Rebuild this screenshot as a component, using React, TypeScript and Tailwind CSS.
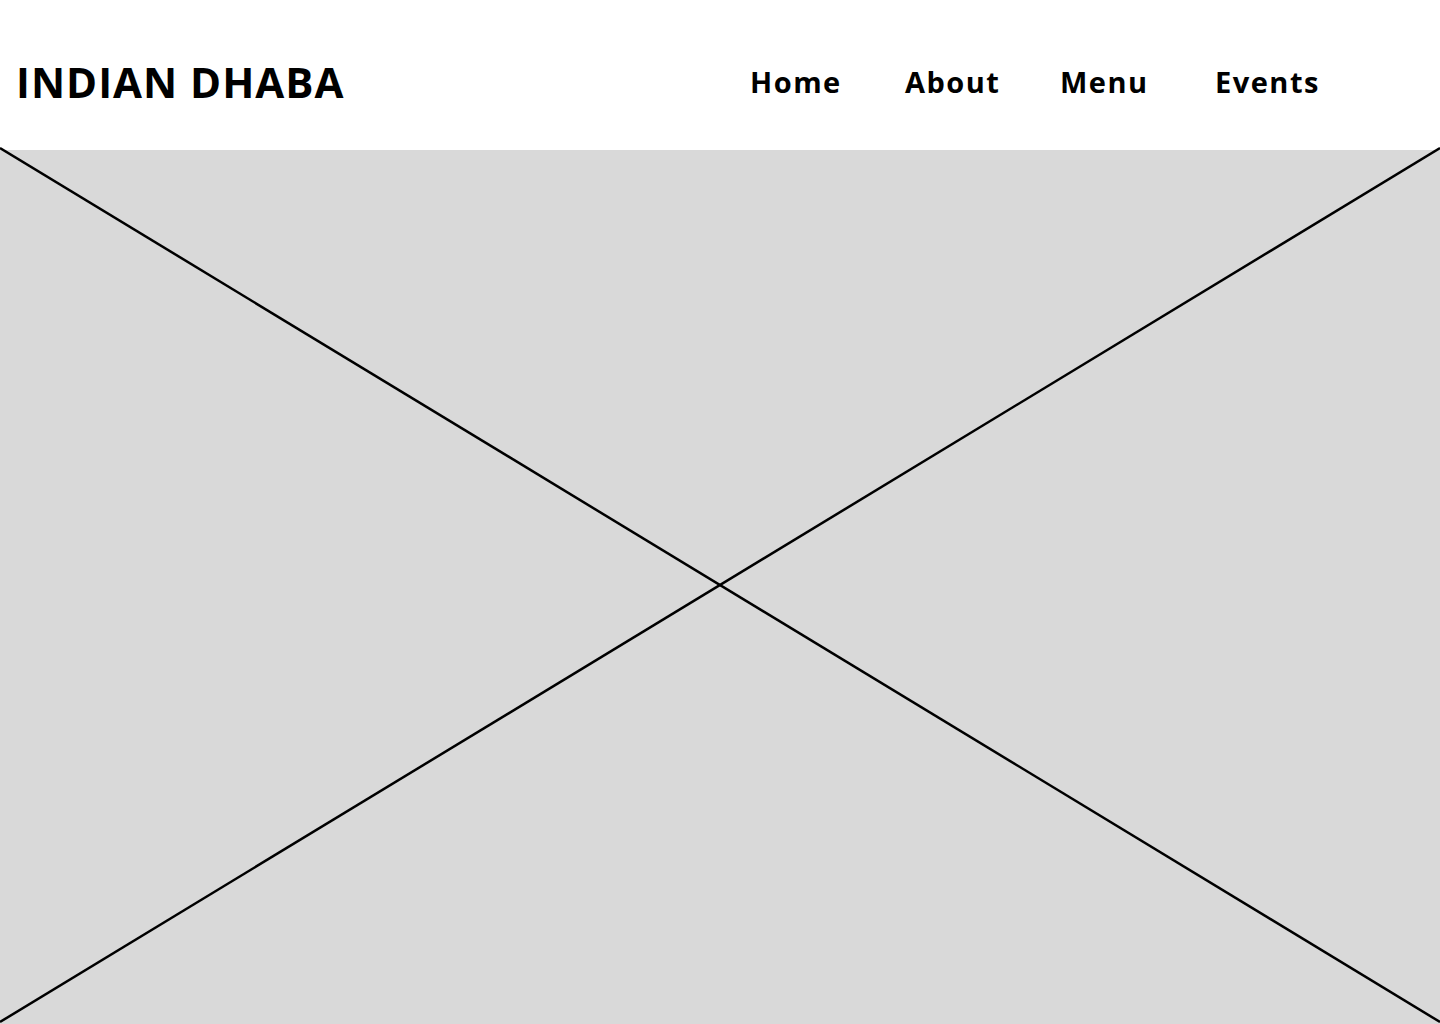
const NAV = ["Home", "About", "Menu", "Events"];

function Header() {
  return (
    <header className="flex h-[150px] items-center bg-white pt-[13px] font-['Open_Sans',sans-serif] text-black">
      <h1 className="ml-[16px] text-[42px] font-bold leading-none tracking-[1px]">INDIAN DHABA</h1>
      <nav className="ml-auto mr-[70px] flex">
        {NAV.map((item) => (
          <a key={item} href="#" className="w-[155px] text-[29px] font-bold leading-none tracking-[1.5px]">
            {item}
          </a>
        ))}
      </nav>
    </header>
  );
}

function Placeholder() {
  return (
    <div className="relative h-[874px] bg-[#d9d9d9]">
      <svg className="absolute inset-0 overflow-visible" width="1440" height="874" viewBox="0 0 1440 874">
        <line x1="0" y1="-2" x2="1440" y2="872" stroke="black" strokeWidth="2.5" />
        <line x1="0" y1="872" x2="1440" y2="-2" stroke="black" strokeWidth="2.5" />
      </svg>
    </div>
  );
}

export default function App() {
  return (
    <div className="h-[1024px] w-[1440px] overflow-hidden bg-white">
      <Header />
      <Placeholder />
    </div>
  );
}
